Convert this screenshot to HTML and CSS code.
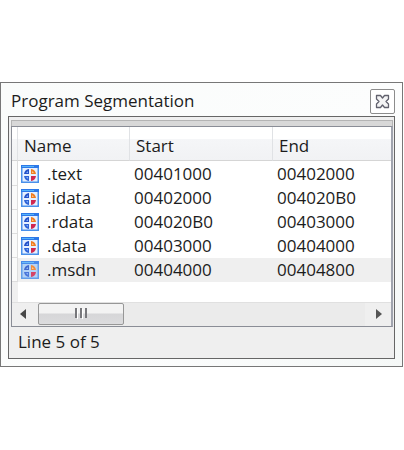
FILE: index.html
```
<!DOCTYPE html>
<html lang="en">
<head>
  <meta charset="UTF-8" />
  <meta name="viewport" content="width=device-width, initial-scale=1.0" />
  <title>Program Segmentation</title>
  <link rel="stylesheet" href="styles.css">
</head>
<body>
  <svg class="defs" width="0" height="0" aria-hidden="true">
    <symbol id="segment" viewBox="0 0 18 18">
      <rect x="0" y="0" width="18" height="18" fill="#4a90ea" />
      <rect x="0" y="0" width="18" height="3" fill="#2d78e8" />
      <rect x="1" y="1" width="12" height="1" fill="#55b4fa" />
      <rect class="pane" x="1.500" y="3" width="15" height="13.500" />
      <path d="M8 4v5H3a6 6 0 0 1 5-5z" fill="#2450c8" />
      <path d="M10 4v5h5a6 6 0 0 0-5-5z" fill="#f07c20" />
      <path d="M8 11v5a6 6 0 0 1-5-5z" fill="#2f62d6" />
      <path d="M10 11v5a6 6 0 0 0 5-5z" fill="#d02850" />
      <path d="M5 8l2-2v2zM5 12h2v2z" fill="#7fb0f6" />
      <path d="M11 6l2 2h-2z" fill="#fcc48a" />
    </symbol>
  </svg>

  <div class="window">
    <div class="title-bar">
      <span class="title">Program Segmentation</span>
      <button class="close" aria-label="Close">
        <svg width="15" height="15" viewBox="0 0 15 15">
          <path d="M1.500 1.500h4l2 2.500 2-2.500h4v3.500l-2.500 2.500 2.500 2.500v3.500h-4l-2-2.500-2 2.500h-4v-3.500l2.500-2.500-2.500-2.500z" fill="#f4f4f5" stroke="#62626e" stroke-width="1.300" stroke-linejoin="round" />
        </svg>
      </button>
    </div>

    <div class="panel">
      <div class="grip"></div>
      <div class="list">
        <table>
          <colgroup>
            <col class="col-gutter">
            <col class="col-name">
            <col class="col-start">
            <col>
          </colgroup>
          <thead>
            <tr><td></td><th>Name</th><th>Start</th><th>End</th></tr>
          </thead>
          <tbody>
            <tr><td></td><td><svg class="icon"><use href="#segment" /></svg>.text</td><td>00401000</td><td>00402000</td></tr>
            <tr><td></td><td><svg class="icon"><use href="#segment" /></svg>.idata</td><td>00402000</td><td>004020B0</td></tr>
            <tr><td></td><td><svg class="icon"><use href="#segment" /></svg>.rdata</td><td>004020B0</td><td>00403000</td></tr>
            <tr><td></td><td><svg class="icon"><use href="#segment" /></svg>.data</td><td>00403000</td><td>00404000</td></tr>
            <tr class="selected"><td></td><td><svg class="icon"><use href="#segment" /></svg>.msdn</td><td>00404000</td><td>00404800</td></tr>
          </tbody>
        </table>
        <div class="blank"></div>
        <div class="scrollbar">
          <button class="arrow" aria-label="Scroll left">
            <svg width="6" height="12" viewBox="0 0 6 12"><path d="M6 1v10L0 6z" fill="#484848" /></svg>
          </button>
          <div class="track">
            <button class="thumb" aria-label="Scroll position">
              <svg width="12" height="11" viewBox="0 0 12 11">
                <path d="M2.500 1v10M7.500 1v10" stroke="#fff" />
                <path d="M1 0v10M6 0v10M11 0v10" stroke="#77777b" stroke-width="2" />
              </svg>
            </button>
          </div>
          <button class="arrow arrow-right" aria-label="Scroll right">
            <svg width="6" height="12" viewBox="0 0 6 12"><path d="M0 1v10l6-5z" fill="#555" /></svg>
          </button>
        </div>
      </div>
      <div class="status">Line 5 of 5</div>
    </div>
  </div>
</body>
</html>
```
FILE: styles.css
```
* {
  box-sizing: border-box;
}

body {
  margin: 82px 1px 0 0;
  background: #fff;
  font-family: "Open Sans", "Noto Sans", sans-serif;
  font-size: 17px;
  line-height: 24px;
  color: #1c1c1c;
}

.defs {
  position: absolute;
}

.window {
  border: 1px solid #777;
  background: linear-gradient(135deg, #fafcfb, #fcfdfd 60%, #f5f8f7);
  padding: 0 7px 7px;
}

.title-bar {
  display: flex;
  align-items: center;
  justify-content: space-between;
  height: 33px;
  padding: 3px 0 0 3px;
}

.close {
  display: flex;
  align-items: center;
  justify-content: center;
  width: 25px;
  height: 25px;
  padding: 0;
  border: 1px solid #8c8c8c;
  border-radius: 2px;
  background: #fff;
}

.panel {
  border: 1px solid #666;
  background: #efefef;
  padding: 3px 1px 0 2px;
}

.grip {
  height: 6px;
  border: 1px solid #b4b4b4;
  border-bottom: none;
  background: #d8d8d8;
}

.list {
  border: 1px solid #8a8d96;
  border-right: 2px solid #a0a4ae;
  background: #fff;
}

table {
  width: 100%;
  table-layout: fixed;
  border-collapse: separate;
  border-spacing: 0;
}

.col-gutter {
  width: 6px;
}

.col-name {
  width: 112px;
}

.col-start {
  width: 143px;
}

th,
td {
  height: 24px;
  padding: 0 4px;
  text-align: left;
  font-weight: normal;
  white-space: nowrap;
}

td:nth-child(2) {
  padding-left: 3px;
}

thead th,
thead td {
  height: 34px;
  padding: 4px 6px 0;
  border-right: 1px solid #e0e2e5;
  border-bottom: 1px solid #d5d5d5;
  background: linear-gradient(#fff 35%, #f5f6f8 35%, #f1f2f4);
}

thead th:last-child {
  border-right: none;
}

thead td,
tbody td:first-child {
  padding: 0;
}

tbody td:first-child {
  border-right: 1px solid #ddd;
  border-bottom: 1px solid #ddd;
  background: #fafafa;
}

tbody tr:first-child td {
  height: 25px;
  padding-top: 1px;
}

.selected td {
  background: #efefef;
}

.icon {
  width: 18px;
  height: 18px;
  margin-right: 8px;
  vertical-align: -3px;
  fill: #e6f0ff;
}

.selected .icon {
  fill: #a9cdf8;
  opacity: 0.85;
}

.blank {
  height: 20px;
  border-left: 6px solid #f0f0f0;
}

.scrollbar {
  display: flex;
  height: 24px;
  border-top: 1px solid #e0e0e0;
  background: #ebebeb;
}

.arrow {
  display: flex;
  align-items: center;
  justify-content: center;
  width: 26px;
  padding: 0 4px 2px 0;
  border: none;
  background: #efefef;
}

.arrow-right {
  padding: 0 0 2px 2px;
}

.track {
  flex: 1;
}

.thumb {
  display: flex;
  align-items: center;
  justify-content: center;
  width: 86px;
  height: 22px;
  padding: 0 0 2px;
  border: 1px solid #979797;
  border-radius: 2px;
  background: linear-gradient(#f3f3f3 45%, #d6d6d8 50%, #dcdcde);
}

.status {
  height: 31px;
  padding: 3px 7px;
}
```
